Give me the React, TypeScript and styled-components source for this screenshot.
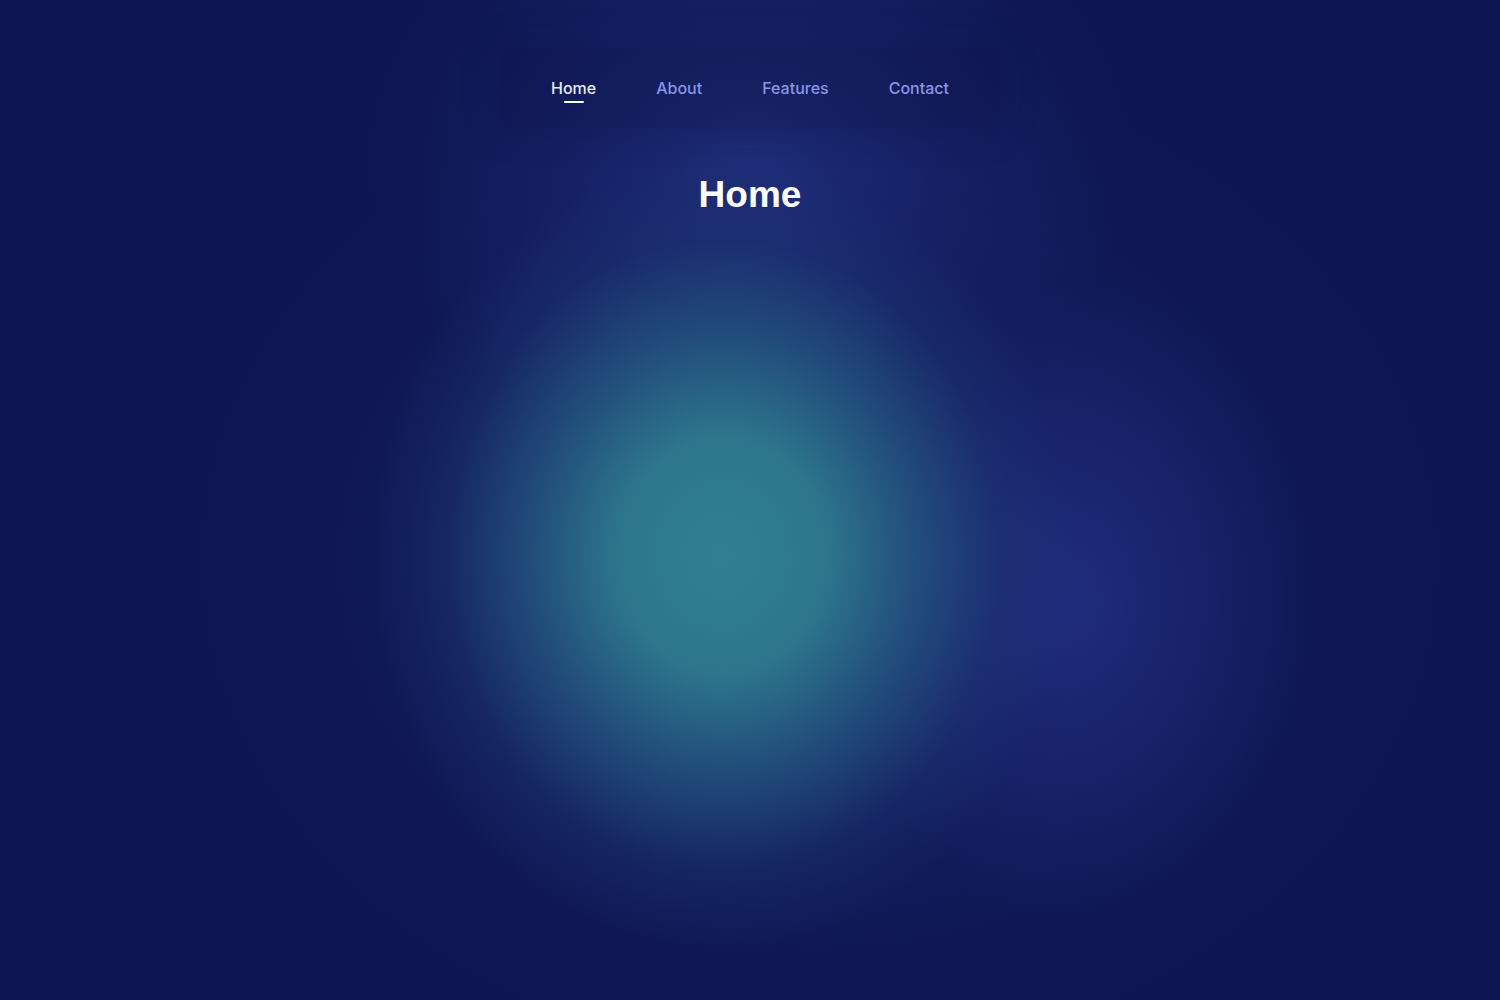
import React from "react";
import styled, { createGlobalStyle } from "styled-components";

const GlobalStyle = createGlobalStyle`
  html, body { margin: 0; padding: 0; background: #0d1650; }
  * { box-sizing: border-box; }
`;

const Page = styled.div`
  min-height: 100vh;
  width: 100%;
  display: flex;
  flex-direction: column;
  align-items: center;
  overflow: hidden;
  background:
    radial-gradient(ellipse 350px 395px at 722px 555px, rgba(48, 128, 145, 1) 0%, rgba(46, 122, 142, 0.95) 30%, rgba(38, 92, 132, 0.72) 56%, rgba(30, 58, 118, 0.35) 80%, rgba(25, 45, 110, 0) 100%),
    radial-gradient(ellipse 240px 320px at 1070px 600px, rgba(36, 50, 135, 0.75) 0%, rgba(32, 44, 126, 0.5) 45%, rgba(20, 30, 100, 0) 100%),
    radial-gradient(ellipse 380px 300px at 750px 160px, rgba(32, 48, 125, 0.9) 0%, rgba(28, 40, 115, 0.5) 50%, rgba(20, 30, 95, 0) 100%),
    radial-gradient(ellipse 620px 500px at 820px 560px, rgba(22, 34, 100, 0.9) 0%, rgba(18, 28, 92, 0.6) 70%, rgba(14, 24, 82, 0) 100%),
    #0d1650;
  font-family: Inter, "Liberation Sans", sans-serif;
`;

const NavBar = styled.nav`
  margin-top: 48px;
  width: 500px;
  height: 80px;
  display: flex;
  align-items: center;
  justify-content: center;
  gap: 60px;
  border-radius: 16px;
  background: rgba(14, 20, 70, 0.3);
  box-shadow: 0 0 30px 10px rgba(14, 20, 70, 0.22);
`;

const NavLink = styled.a<{ $active?: boolean }>`
  position: relative;
  font-size: 16px;
  line-height: 24px;
  font-weight: 500;
  text-decoration: none;
  cursor: pointer;
  color: ${(p) => (p.$active ? "#e4e7f8" : "#8b95e6")};

  &::after {
    content: "";
    display: ${(p) => (p.$active ? "block" : "none")};
    position: absolute;
    left: 50%;
    bottom: -3px;
    width: 20px;
    height: 2px;
    margin-left: -10px;
    border-radius: 1px;
    background: #ffffff;
  }
`;

const Title = styled.h1`
  margin: 45px 0 0;
  font-family: "Liberation Sans", Arial, sans-serif;
  font-size: 37px;
  line-height: 44px;
  font-weight: 700;
  color: #ffffff;
`;

const links = ["Home", "About", "Features", "Contact"];

export default function App() {
  return (
    <>
      <GlobalStyle />
      <Page>
        <NavBar>
          {links.map((l) => (
            <NavLink key={l} $active={l === "Home"}>
              {l}
            </NavLink>
          ))}
        </NavBar>
        <Title>Home</Title>
      </Page>
    </>
  );
}
